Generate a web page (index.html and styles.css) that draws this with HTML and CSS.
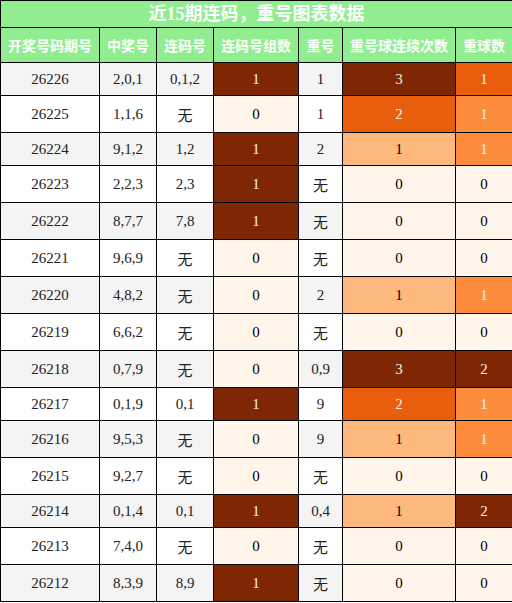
FILE: index.html
```html
<!DOCTYPE html>
<html lang="zh-CN">
<head>
    <meta charset="UTF-8">
    <title>近15期连码，重号图表数据</title>
    <link rel="stylesheet" href="styles.css">
</head>
<body>
    <table class="data">
        <colgroup>
            <col class="c-issue">
            <col class="c-win">
            <col class="c-lian">
            <col class="c-group">
            <col class="c-chong">
            <col class="c-cont">
            <col class="c-ball">
        </colgroup>
        <thead>
            <tr><th class="title" colspan="7">近15期连码，重号图表数据</th></tr>
            <tr>
                <th>开奖号码期号</th>
                <th>中奖号</th>
                <th>连码号</th>
                <th>连码号组数</th>
                <th>重号</th>
                <th>重号球连续次数</th>
                <th>重球数</th>
            </tr>
        </thead>
        <tbody>
            <tr><td>26226</td><td>2,0,1</td><td>0,1,2</td><td class="g4">1</td><td>1</td><td class="g4">3</td><td class="g3">1</td></tr>
            <tr><td>26225</td><td>1,1,6</td><td>无</td><td class="g0">0</td><td>1</td><td class="g3">2</td><td class="g2">1</td></tr>
            <tr><td>26224</td><td>9,1,2</td><td>1,2</td><td class="g4">1</td><td>2</td><td class="g1">1</td><td class="g2">1</td></tr>
            <tr><td>26223</td><td>2,2,3</td><td>2,3</td><td class="g4">1</td><td>无</td><td class="g0">0</td><td class="g0">0</td></tr>
            <tr><td>26222</td><td>8,7,7</td><td>7,8</td><td class="g4">1</td><td>无</td><td class="g0">0</td><td class="g0">0</td></tr>
            <tr><td>26221</td><td>9,6,9</td><td>无</td><td class="g0">0</td><td>无</td><td class="g0">0</td><td class="g0">0</td></tr>
            <tr><td>26220</td><td>4,8,2</td><td>无</td><td class="g0">0</td><td>2</td><td class="g1">1</td><td class="g2">1</td></tr>
            <tr><td>26219</td><td>6,6,2</td><td>无</td><td class="g0">0</td><td>无</td><td class="g0">0</td><td class="g0">0</td></tr>
            <tr><td>26218</td><td>0,7,9</td><td>无</td><td class="g0">0</td><td>0,9</td><td class="g4">3</td><td class="g4">2</td></tr>
            <tr><td>26217</td><td>0,1,9</td><td>0,1</td><td class="g4">1</td><td>9</td><td class="g3">2</td><td class="g2">1</td></tr>
            <tr><td>26216</td><td>9,5,3</td><td>无</td><td class="g0">0</td><td>9</td><td class="g1">1</td><td class="g2">1</td></tr>
            <tr><td>26215</td><td>9,2,7</td><td>无</td><td class="g0">0</td><td>无</td><td class="g0">0</td><td class="g0">0</td></tr>
            <tr><td>26214</td><td>0,1,4</td><td>0,1</td><td class="g4">1</td><td>0,4</td><td class="g1">1</td><td class="g4">2</td></tr>
            <tr><td>26213</td><td>7,4,0</td><td>无</td><td class="g0">0</td><td>无</td><td class="g0">0</td><td class="g0">0</td></tr>
            <tr><td>26212</td><td>8,3,9</td><td>8,9</td><td class="g4">1</td><td>无</td><td class="g0">0</td><td class="g0">0</td></tr>
        </tbody>
    </table>
</body>
</html>
```
FILE: styles.css
```css
body {
    margin: 0;
    font-family: "Liberation Serif", "Noto Sans CJK SC", serif;
    background: #fff;
}

.data {
    width: 512px;
    border-collapse: collapse;
    table-layout: fixed;
    font-size: 15px;
    color: #222;
}

.c-issue { width: 99px; }
.c-win { width: 57px; }
.c-lian { width: 57px; }
.c-group { width: 85px; }
.c-chong { width: 44px; }
.c-cont { width: 113px; }
.c-ball { width: 57px; }

.data th,
.data td {
    border: 1.5px solid #000;
    text-align: center;
}

.data th {
    background-color: #90ee90;
    color: #fff;
    font-family: "Noto Sans CJK SC", sans-serif;
    font-size: 14px;
    font-weight: bold;
    height: 34px;
    padding: 0;
}

.data th.title {
    font-family: "Liberation Serif", "Noto Sans CJK SC", serif;
    font-size: 18px;
    height: 26px;
    line-height: 24px;
}

.data td {
    padding: 8px 0 7px;
    background-color: #fff;
}

.data tbody tr:nth-child(odd) td {
    background-color: #f4f4f4;
}

.data tbody tr td.g0 { background-color: #fff5eb; color: #000; }
.data tbody tr td.g1 { background-color: #fdb97d; color: #000; }
.data tbody tr td.g2 { background-color: #fd8d3c; color: #f1f1f1; }
.data tbody tr td.g3 { background-color: #e95e0d; color: #f1f1f1; }
.data tbody tr td.g4 { background-color: #7f2704; color: #f1f1f1; }
```
